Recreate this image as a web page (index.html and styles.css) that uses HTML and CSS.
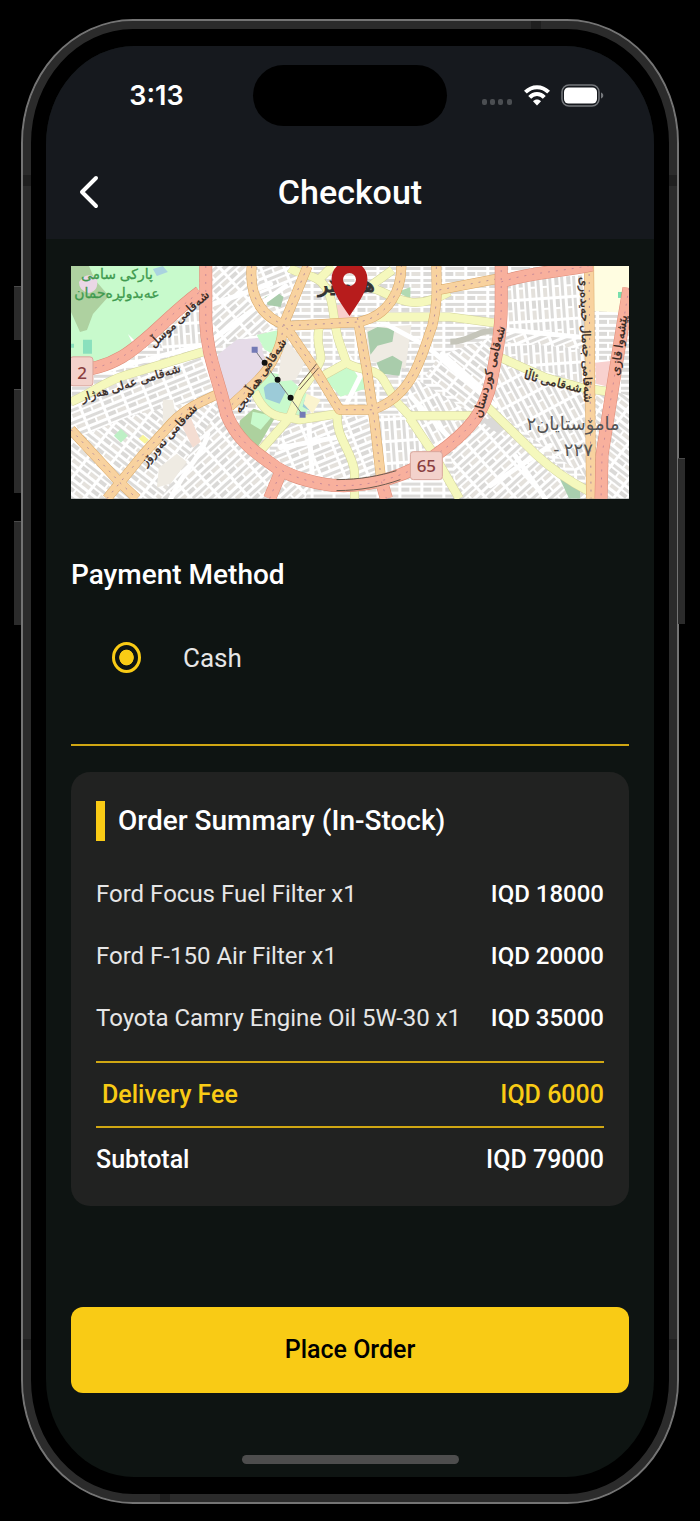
FILE: index.html
```
<!DOCTYPE html>
<html lang="en">
<head>
    <meta charset="UTF-8">
    <meta name="viewport" content="width=device-width, initial-scale=1.0">
    <title>Checkout</title>
    <link rel="stylesheet" href="styles.css">
</head>
<body>
    <div class="phone">
        <span class="side-button mute"></span>
        <span class="side-button volume-up"></span>
        <span class="side-button volume-down"></span>
        <span class="side-button power"></span>
        <span class="antenna left top-side"></span>
        <span class="antenna right top-side"></span>
        <span class="antenna left bottom-side"></span>
        <span class="antenna right bottom-side"></span>
        <span class="antenna top"></span>
        <span class="antenna bottom"></span>

        <div class="screen">
            <header class="app-header">
                <div class="status-bar">
                    <div class="time">3:13</div>
                    <div class="island"></div>
                    <div class="status-icons">
                        <svg width="32" height="22" viewBox="0 0 32 22" fill="#4b4e52">
                            <rect x="1" y="14" width="5" height="6" rx="2"/>
                            <rect x="9" y="14" width="5" height="6" rx="2"/>
                            <rect x="17" y="14" width="5" height="6" rx="2"/>
                            <rect x="26" y="14" width="5" height="6" rx="2"/>
                        </svg>
                        <svg width="26" height="22" viewBox="0 0 26 22" fill="none" stroke="#fff" stroke-width="4">
                            <path d="M1.400 7.200C8 0.500 18 0.500 24.600 7.200"/>
                            <path d="M5.700 12.400C9.800 8 16.200 8 20.300 12.400"/>
                            <path d="M13 20.500l-4-4.300c2.200-2.200 5.800-2.200 8 0z" fill="#fff" stroke="none"/>
                        </svg>
                        <svg width="43" height="24" viewBox="0 0 43 24">
                            <rect x="1" y="1" width="37" height="21" rx="7" fill="none" stroke="#74777b" stroke-width="1.500"/>
                            <rect x="3" y="3.500" width="33" height="16" rx="4.500" fill="#fff"/>
                            <path d="M40 8.500c3 1 3 5 0 6z" fill="#74777b"/>
                        </svg>
                    </div>
                </div>
                <div class="nav-bar">
                    <button class="back" type="button" aria-label="Back">
                        <svg width="20" height="34" viewBox="0 0 20 34" fill="none" stroke="#fff" stroke-width="4" stroke-linecap="round" stroke-linejoin="round">
                            <path d="M17 3L3 17l14 14"/>
                        </svg>
                    </button>
                    <h1>Checkout</h1>
                </div>
            </header>

            <main class="content">
                <svg class="map" viewBox="0 0 559 233" role="img" aria-label="Delivery location">
                    <defs>
                        <pattern id="blocks" width="22" height="12" patternUnits="userSpaceOnUse">
                            <rect width="22" height="12" fill="#fff"/>
                            <rect x="1" y="1" width="19" height="3" fill="#dcdbd9"/>
                            <rect x="1" y="6" width="8" height="4" fill="#dad9d7"/>
                            <rect x="11" y="6" width="9" height="4" fill="#e4e1dc"/>
                        </pattern>
                        <pattern id="blocksUp" href="#blocks" patternTransform="rotate(-42)"/>
                        <pattern id="blocksDown" href="#blocks" patternTransform="rotate(38)"/>
                        <pattern id="blocksTilt" href="#blocks" patternTransform="rotate(-22)"/>
                        <pattern id="blocksTall" href="#blocks" patternTransform="rotate(86)"/>
                        <pattern id="blocksSteep" href="#blocks" patternTransform="rotate(62)"/>
                        <path id="yellow" d="M0 136C20 128 32 116 56 109L132 86M304 51H379L424 57M219 2C232 10 246 8 254 20 264 32 262 55 268 74L276 97C290 106 306 102 313 114L326 136 339 150 406 150M339 152L362 186 389 233M431 92L476 112 512 122 539 126M417 141L466 189C482 204 500 216 519 226M249 60C244 78 252 88 250 94 244 110 232 120 228 130L219 152 189 186M184 126C192 146 204 152 219 152L229 154 267 148C264 170 282 186 284 206V233M249 112L276 97M302 22C325 30 340 48 379 26M246 16L262 0M300 20L322 4"/>
                        <path id="orange" d="M0 164L49 217 66 233M36 233L72 189 102 156C116 142 130 136 150 127M237 0L212 61C212 75 206 90 196 104 188 116 172 128 159 141M181 0C178 35 194 52 216 60L289 56C318 50 331 25 331 0M216 62L246 106 269 144H302C345 130 352 85 362 60 368 35 366 20 366 0M287 52L296 102 304 156 311 216M519 0L521 233M369 24L431 12"/>
                        <path id="ring" d="M135 0V55C136 90 147 110 156 149 168 178 190 190 206 202 222 212 250 220 269 220 300 221 340 210 366 189 400 165 415 145 421 115 426 90 431 65 431 40V0M0 105C60 104 80 62 129 26M431 16C460 6 490 6 522 -1M559 22L549 82 541 132 532 189 531 233M209 209L199 233M311 216L316 233"/>
                    </defs>

                    <!-- Housing blocks -->
                    <rect width="559" height="233" fill="url(#blocks)"/>
                    <path d="M0 150L100 112 146 130 160 150 90 233H0z" fill="url(#blocksDown)"/>
                    <path d="M0 136L60 110 140 90 148 130 60 150 0 175z" fill="url(#blocksTilt)"/>
                    <path d="M90 233L150 140 190 190 240 215 235 233z" fill="url(#blocksUp)"/>
                    <path d="M90 78L130 26 135 80 95 92z" fill="url(#blocksTall)"/>
                    <path d="M140 0H182L210 62 166 74 140 84z" fill="url(#blocksUp)"/>
                    <path d="M187 0H235L213 56 190 40z" fill="url(#blocksTilt)"/>
                    <path d="M219 152L300 150 310 210 270 220 200 198z" fill="url(#blocksTilt)"/>
                    <path d="M304 150L336 150 362 188 311 214z" fill="url(#blocksTall)"/>
                    <path d="M431 14L519 0V120L431 90z" fill="url(#blocksTall)"/>
                    <path d="M436 64L519 70V84L436 76z" fill="url(#blocksTilt)"/>
                    <path d="M369 90L426 70 420 120 400 145 355 110z" fill="url(#blocksDown)"/>
                    <path d="M340 110L406 150 370 186 335 150z" fill="url(#blocksSteep)"/>
                    <path d="M380 190L420 142 519 226V233H390z" fill="url(#blocksUp)"/>
                    <path d="M425 95L520 125V215L418 140z" fill="url(#blocksSteep)"/>
                    <path d="M526 120L559 130V233H526z" fill="url(#blocksDown)"/>

                    <!-- Parks, water and special areas -->
                    <path d="M0 0H130L128 24 98 50 66 77 30 96 0 99z" fill="#c8facc"/>
                    <path d="M0 0H18L24 14 38 30 22 48 16 64 9 66 0 46z" fill="#aed1a0"/>
                    <path d="M8 16q8-12 18-3 2 12-8 14-10-2-10-11z" fill="#ead7e6"/>
                    <path d="M82 3l10-3 5 6-11 4z" fill="#aad3df"/>
                    <path d="M12 74h9v14h-9zM0 78h3v4H0z" fill="#8ae0bd"/>
                    <path d="M57 68l10 10-3 4z" fill="#fff"/>
                    <path d="M147 89L166 74 189 72 196 102 178 120 159 139 152 122z" fill="#e6dbe8"/>
                    <path d="M186 69L208 64 206 90 194 84zM196 106l20 4 24 22-5 20-38-4-14-22z" fill="#c8facc"/>
                    <path d="M193 122q6-8 16-4l6 8-6 12-14-5zM234 134l7 5-2 6-7-4z" fill="#9ccbd8"/>
                    <path d="M169 155l14-12 22 8-20 34-16-16z" fill="#add19e"/>
                    <path d="M182 146l20 4-12 14-10-6z" fill="#c8facc"/>
                    <path d="M213 72l22 24-10 18-18 2z" fill="#f0ebe3"/>
                    <path d="M236 128l14 6-8 14-9-10z" fill="#fbf4cf"/>
                    <path d="M254 113L275 102 294 106 298 122 270 131z" fill="#c8facc"/>
                    <path d="M194 31l12-5 7 5-3 10-13-2z" fill="#a9ccab"/>
                    <path d="M296 62l45-3-6 44-38-8z" fill="#efebe3"/>
                    <path d="M297 66l10-5 17 2-2 13-15 4-7 9zM306 97l16-7 10 6-3 14-18-2z" fill="#a9ccab"/>
                    <path d="M265 39h16v15h-15z" fill="#f9cfcb"/>
                    <path d="M327 26l13-5v12z" fill="#b2dab2"/>
                    <path d="M523 0h36v47l-36-2z" fill="#fffde1"/>
                    <path d="M548 26h4v6h-4z" fill="#77dfad"/>
                    <path d="M525 97l18-2-5 26-12-3z" fill="#f8d1cf"/>
                    <path d="M490 214l20 8v11h-11z" fill="#a9cfaf"/>
                    <path d="M412 156l16-8 10 8-10 12z" fill="#dad9d8"/>
                    <path d="M380 76c22 0 28-14 46-10" fill="none" stroke="#c5c5ba" stroke-width="6"/>
                    <path d="M92 134h10l4 22-14 6zM88 202l18-14 10 8-16 22-14 4z" fill="#efebe3"/>
                    <path d="M110 158l10-6 10 24-8 6z" fill="#f4ddd2"/>
                    <path d="M43 170l7-7 7 7-7 7z" fill="#bdf0c5"/>
                    <path d="M68 173l4-4 6 5-4 4z" fill="#f8f69a"/>

                    <!-- White streets -->
                    <g fill="none" stroke="#fff" stroke-width="5" stroke-linecap="round">
                        <path d="M30 106L136 78 215 20M137 40L200 18"/>
                        <path d="M137 168C132 190 112 205 100 233"/>
                        <path d="M304 52L356 80 425 140"/>
                        <path d="M340 130L379 172M372 88L420 130"/>
                        <path d="M238 155L242 215M210 182L275 170M275 140L290 110 262 66"/>
                        <path d="M436 64L518 72"/>
                        <path d="M420 220L480 180M445 190L475 233"/>
                    </g>

                    <!-- Main roads, each with a darker casing below -->
                    <g fill="none" stroke-linejoin="round">
                        <use href="#yellow" stroke="#d2d39c" stroke-width="9"/>
                        <use href="#yellow" stroke="#f5f8bd" stroke-width="8"/>
                        <use href="#orange" stroke="#d9a968" stroke-width="10"/>
                        <use href="#orange" stroke="#f8d29f" stroke-width="9"/>
                        <use href="#orange" stroke="#b58f9c" stroke-dasharray="2 6"/>
                        <use href="#ring" stroke="#dd8b78" stroke-width="13"/>
                        <use href="#ring" stroke="#f8b09d" stroke-width="12"/>
                        <use href="#ring" stroke="#c78a98" stroke-dasharray="2 6"/>
                        <path d="M266 225C290 225 310 221 330 214M266 214C290 214 310 210 326 205M228 120L246 98M229 124L248 102" stroke="#6b5a4e"/>
                    </g>

                    <!-- Cable car -->
                    <path d="M184 84L232 149" stroke="#777"/>
                    <g fill="#111"><circle cx="194" cy="97" r="3"/><circle cx="207" cy="114" r="3"/><circle cx="220" cy="132" r="3"/></g>
                    <path d="M181 81h6v6h-6zM229 146h6v6h-6z" fill="#7379b5"/>

                    <!-- Labels -->
                    <g class="park-label">
                        <text x="46" y="13">پارکی سامی</text>
                        <text x="46" y="32">عەبدولڕەحمان</text>
                    </g>
                    <g class="street-label">
                        <text transform="translate(111 56) rotate(-43)">شەقامی موسڵ</text>
                        <text transform="translate(61 121) rotate(-17)">شەقامی عەلی هەژار</text>
                        <text transform="translate(101 172) rotate(-48)">شەقامی نەورۆز</text>
                        <text transform="translate(193 112) rotate(-57)">شەقامی هەڵەبجە</text>
                        <text transform="translate(423 107) rotate(-75)">شەقامی کوردستان</text>
                        <text transform="translate(482 120) rotate(14)">شەقامی ئاڵا</text>
                        <text transform="translate(512 74) rotate(88)">شەقامی جەمال حەیدەری</text>
                        <text transform="translate(553 80) rotate(-82)">پێشەوا قازی</text>
                    </g>
                    <g class="place-label">
                        <text x="503" y="164">مامۆستایان٢</text>
                        <text x="503" y="190">- ٢٢٧</text>
                        <text class="city" x="276" y="26">هەولێر</text>
                    </g>

                    <!-- Road shields -->
                    <g class="shield">
                        <rect x="-1" y="91" width="23" height="29" rx="3"/>
                        <text x="11" y="113">2</text>
                        <rect x="340" y="186" width="32" height="28" rx="3"/>
                        <text x="356" y="206">65</text>
                    </g>

                    <!-- Pin -->
                    <path d="M279 50C268 34 261 24 261 13A18 18 0 0 1 297 13C297 24 290 34 279 50zM279 7a6.500 6.500 0 1 0 0 13a6.500 6.500 0 1 0 0-13z" fill="#b71c1c" fill-rule="evenodd"/>
                </svg>

                <section class="payment">
                    <h2>Payment Method</h2>
                    <label class="option">
                        <input type="radio" name="payment" value="cash" checked>
                        <span>Cash</span>
                    </label>
                </section>

                <section class="summary">
                    <h2>Order Summary (In-Stock)</h2>
                    <table>
                        <tbody class="items">
                            <tr><td>Ford Focus Fuel Filter x1</td><td class="price">IQD 18000</td></tr>
                            <tr><td>Ford F-150 Air Filter x1</td><td class="price">IQD 20000</td></tr>
                            <tr><td>Toyota Camry Engine Oil 5W-30 x1</td><td class="price">IQD 35000</td></tr>
                        </tbody>
                        <tbody class="totals">
                            <tr class="delivery"><td>Delivery Fee</td><td class="price">IQD 6000</td></tr>
                            <tr class="subtotal"><td>Subtotal</td><td class="price">IQD 79000</td></tr>
                        </tbody>
                    </table>
                </section>

                <button class="place-order" type="button">Place Order</button>
            </main>

            <div class="home-indicator"></div>
        </div>
    </div>
</body>
</html>
```
FILE: styles.css
```
* {
    box-sizing: border-box;
}

body {
    margin: 0;
    padding: 19px 21px;
    background-color: #000;
    color: #fff;
    font-family: Roboto, "Liberation Sans", sans-serif;
}

h1, h2 {
    margin: 0;
    font-weight: 500;
}

button {
    padding: 0;
    border: 0;
    background: none;
    font-family: inherit;
    cursor: pointer;
}

/* Phone frame */
.phone {
    position: relative;
    padding: 25px 23px;
    background-color: #000;
    border: 2px solid #747474;
    border-radius: 112px / 124px;
    box-shadow: inset 0 0 0 8px #2b2b2b;
}

.side-button {
    position: absolute;
    left: -9px;
    width: 7px;
    background-color: #2b2b2b;
    border-top: 1px solid #4a4a4a;
}

.mute {
    top: 265px;
    height: 54px;
}

.volume-up {
    top: 368px;
    height: 104px;
}

.volume-down {
    top: 500px;
    height: 104px;
}

.power {
    left: auto;
    right: -8px;
    top: 437px;
    height: 166px;
}

.antenna {
    position: absolute;
    width: 8px;
    height: 11px;
    background-color: #1f1f1f;
}

.left {
    left: 0;
}

.right {
    right: 0;
}

.top-side {
    top: 154px;
}

.bottom-side {
    bottom: 152px;
}

.top, .bottom {
    width: 10px;
    height: 8px;
}

.top {
    top: 0;
    right: 136px;
}

.bottom {
    bottom: 0;
    left: 137px;
}

.screen {
    overflow: hidden;
    padding-bottom: 13px;
    background-color: #0e1412;
    border-radius: 88px / 98px;
}

/* Header */
.app-header {
    background-color: #16191e;
}

.status-bar {
    display: grid;
    grid-template-columns: 1fr 194px 1fr;
    align-items: center;
    padding-top: 19px;
}

.time {
    padding-left: 14px;
    text-align: center;
    font-family: Inter, sans-serif;
    font-size: 27px;
    font-weight: 600;
}

.island {
    height: 61px;
    border-radius: 31px;
    background-color: #000;
}

.status-icons {
    display: flex;
    align-items: center;
    justify-content: flex-end;
    gap: 11px;
    padding-right: 50px;
}

.nav-bar {
    display: grid;
    grid-template-columns: 86px 1fr 86px;
    align-items: center;
    padding: 36px 0 18px;
    height: 113px;
}

.back {
    display: flex;
    align-items: center;
    justify-content: center;
    height: 48px;
}

.nav-bar h1 {
    text-align: center;
    font-size: 34px;
    line-height: 56px;
}

/* Content */
.content {
    padding: 27px 25px 62px;
}

.map {
    display: block;
    width: 100%;
    height: auto;
    font-family: "Noto Sans", "DejaVu Sans", sans-serif;
    text-anchor: middle;
}

.park-label {
    font-size: 14px;
    fill: #3f9a4f;
    stroke: #3f9a4f;
    stroke-width: 0.3px;
}

.street-label {
    font-size: 12px;
    fill: #33271f;
    stroke: #33271f;
    stroke-width: 0.3px;
}

.place-label {
    font-size: 18px;
    fill: #555;
}

.place-label .city {
    font-size: 21px;
    fill: #333;
    stroke: #333;
}

.shield rect {
    fill: #f3d2cb;
    stroke: #d9a69c;
}

.shield text {
    font-size: 17px;
    font-weight: 500;
    fill: #8a4040;
}

.payment {
    padding: 56px 0 60px;
    border-bottom: 2px solid #d0a713;
}

.payment h2, .summary h2 {
    font-size: 28px;
    line-height: 40px;
}

.option {
    display: flex;
    align-items: center;
    gap: 42px;
    margin-top: 37px;
    padding-left: 41px;
    font-size: 26px;
    line-height: 40px;
    height: 52px;
    color: #e6e6e6;
}

.option input {
    appearance: none;
    width: 29px;
    height: 31px;
    margin: 0;
    border: 3px solid #f9cb15;
    border-radius: 50%;
    background: radial-gradient(closest-side, #f9cb15 60%, transparent 66%);
}

.summary {
    margin-top: 26px;
    padding: 29px 25px 15px;
    background-color: #212221;
    border-radius: 19px;
}

.summary h2 {
    padding-left: 13px;
    border-left: 9px solid #f9cb15;
}

.summary table {
    width: 100%;
    margin-top: 22px;
    border-spacing: 0;
    font-size: 24px;
    line-height: 30px;
}

.summary td {
    padding: 16px 0;
}

.items td {
    color: #e6e6e6;
}

.items tr:last-child td {
    padding-bottom: 28px;
}

.summary .price {
    text-align: right;
    font-weight: 500;
    color: #fff;
    white-space: nowrap;
}

.totals {
    font-size: 25px;
    font-weight: 500;
    line-height: 31px;
}

.summary .delivery td {
    color: #f9cb15;
    border-top: 2px solid #d0a713;
    border-bottom: 2px solid #d0a713;
}

.summary .delivery td:first-child {
    padding-left: 6px;
}

.place-order {
    width: 100%;
    height: 86px;
    margin-top: 101px;
    border-radius: 12px;
    background-color: #f9cb15;
    color: #000;
    font-size: 25px;
    font-weight: 500;
}

.home-indicator {
    width: 217px;
    height: 9px;
    margin: 0 auto;
    border-radius: 5px;
    background-color: #4d4d4d;
}
```
